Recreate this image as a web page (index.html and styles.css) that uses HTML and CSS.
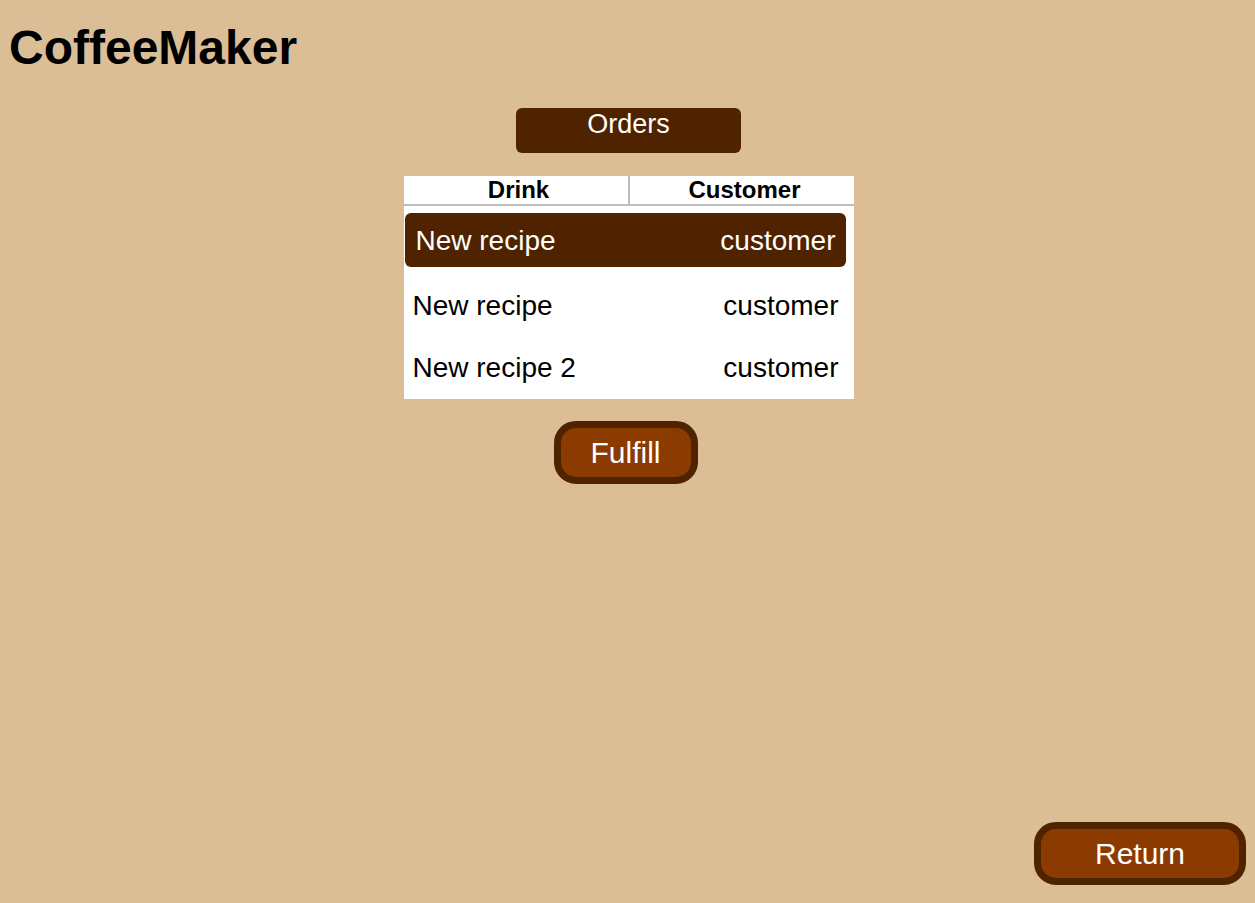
FILE: index.html
```html
<!DOCTYPE html>
<html lang="en">
<head>
<meta charset="utf-8">
<title>CoffeeMaker</title>
<link rel="stylesheet" href="styles.css">
</head>
<body>
<div class="page">
  <h1 class="title">CoffeeMaker</h1>
  <main class="content">
    <div class="section-label">Orders</div>
    <div class="orders">
      <div class="orders-head">
        <div class="head-cell">Drink</div>
        <div class="head-cell head-cell-right">Customer</div>
      </div>
      <div class="orders-body">
        <div class="order-row selected"><span>New recipe</span><span>customer</span></div>
        <div class="order-row"><span>New recipe</span><span>customer</span></div>
        <div class="order-row"><span>New recipe 2</span><span>customer</span></div>
      </div>
    </div>
    <button class="btn btn-fulfill">Fulfill</button>
  </main>
  <footer class="footer">
    <button class="btn btn-return">Return</button>
  </footer>
</div>
</body>
</html>
```
FILE: styles.css
```css
html, body {
  margin: 0;
  padding: 0;
  background: #dbbe96;
  font-family: "Liberation Sans", Arial, sans-serif;
  color: #000;
}

.page {
  min-height: 903px;
  box-sizing: border-box;
  display: flex;
  flex-direction: column;
  padding: 0 9px 18px 9px;
}

.title {
  margin: 0;
  padding-top: 20px;
  font-size: 48px;
  line-height: 56px;
  font-weight: bold;
}

.content {
  flex: 1;
  display: flex;
  flex-direction: column;
  align-items: center;
  padding: 32px 0 0 2px;
}

.section-label {
  width: 225px;
  height: 45px;
  background: #4f2300;
  border-radius: 6px;
  color: #fff;
  font-size: 27px;
  line-height: 32px;
  text-align: center;
}

.orders {
  margin-top: 23px;
  width: 450px;
  background: #fff;
  padding-bottom: 5px;
}

.orders-head {
  display: flex;
  border-bottom: 2px solid #bdbdbd;
}

.head-cell {
  flex: 1;
  text-align: center;
  font-weight: bold;
  font-size: 24px;
  line-height: 28px;
  padding-left: 6px;
}

.head-cell-right {
  border-left: 2px solid #bdbdbd;
}

.orders-body {
  padding-top: 7px;
  display: flex;
  flex-direction: column;
}

.order-row {
  height: 54px;
  display: flex;
  align-items: center;
  justify-content: space-between;
  font-size: 28px;
  line-height: 34px;
  padding: 2px 15px 0 9px;
  box-sizing: border-box;
}

.order-row + .order-row {
  margin-top: 8px;
}

.order-row.selected {
  background: #4f2300;
  color: #fff;
  border-radius: 6px;
  margin: 0 8px 3px 1px;
  padding: 2px 10px 0 11px;
}

.btn {
  font-family: "Liberation Sans", Arial, sans-serif;
  background: #8b3a00;
  color: #fff;
  border: 7px solid #4f2300;
  border-radius: 22px;
  height: 63px;
  font-size: 30px;
  padding: 0;
  cursor: pointer;
}

.btn-fulfill {
  margin: 22px 6px 0 0;
  width: 144px;
}

.footer {
  display: flex;
  justify-content: flex-end;
}

.btn-return {
  width: 212px;
}
```
